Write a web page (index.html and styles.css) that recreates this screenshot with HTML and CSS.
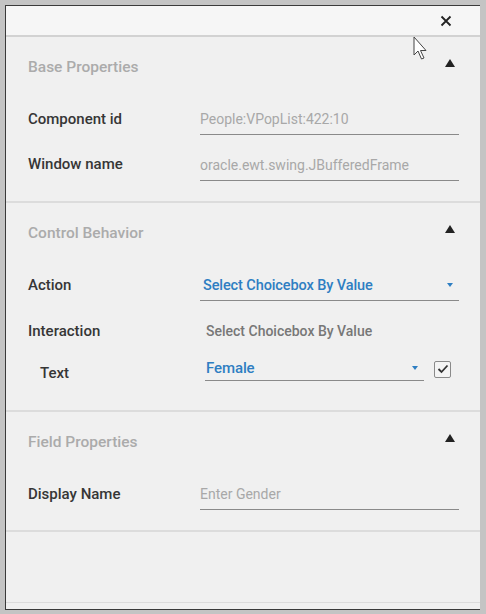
FILE: index.html
```html
<!DOCTYPE html>
<html lang="en">
<head>
<meta charset="utf-8"/>
<meta content="width=device-width, initial-scale=1.0" name="viewport"/>
<title>Properties</title>
<link rel="stylesheet" href="styles.css">
</head>
<body>
<div class="window">
  <div class="titlebar">
    <button class="close" title="Close">
      <svg width="12" height="12" viewBox="0 0 12 12"><path d="M1.5 1.5 L10.5 10.5 M10.5 1.5 L1.5 10.5" stroke="#222" stroke-width="1.8" fill="none"/></svg>
    </button>
  </div>

  <section class="group">
    <div class="group-head">
      <h2>Base Properties</h2>
      <span class="toggle"></span>
    </div>
    <div class="row">
      <label>Component id</label>
      <div class="field"><span class="value muted">People:VPopList:422:10</span></div>
    </div>
    <div class="row">
      <label>Window name</label>
      <div class="field"><span class="value muted">oracle.ewt.swing.JBufferedFrame</span></div>
    </div>
  </section>

  <section class="group behavior">
    <div class="group-head">
      <h2>Control Behavior</h2>
      <span class="toggle"></span>
    </div>
    <div class="row">
      <label>Action</label>
      <div class="field select"><span class="value blue">Select Choicebox By Value</span><span class="caret"></span></div>
    </div>
    <div class="row short">
      <label>Interaction</label>
      <div class="plain">Select Choicebox By Value</div>
    </div>
    <div class="row sub">
      <label>Text</label>
      <div class="field select narrow"><span class="value blue big">Female</span><span class="caret"></span></div>
      <span class="check">
        <svg width="12" height="10" viewBox="0 0 12 10"><path d="M1.5 5 L4.5 8 L10.5 1.5" stroke="#333" stroke-width="1.8" fill="none"/></svg>
      </span>
    </div>
  </section>

  <section class="group">
    <div class="group-head">
      <h2>Field Properties</h2>
      <span class="toggle"></span>
    </div>
    <div class="row">
      <label>Display Name</label>
      <div class="field"><span class="value muted">Enter Gender</span></div>
    </div>
  </section>

  <div class="filler"></div>

  <svg class="cursor" width="16" height="26" viewBox="0 0 16 26"><path d="M1 1 L1 19 L5 15 L8.5 23 L11 22 L7.5 14.5 L13 14.5 Z" fill="#fff" stroke="#444" stroke-width="1"/></svg>
</div>
</body>
</html>
```

FILE: styles.css
```css
html, body { margin: 0; padding: 0; height: 100%; }
body { background: #c4c4c4; font-family: Roboto, "Noto Sans", Arial, sans-serif; color: #333; }

.window {
  position: relative;
  margin: 5px 6px 0 5px;
  height: 603px;
  background: #f0f0f0;
  border-top: 1px solid #3a3a3a;
  border-left: 1px solid #3a3a3a;
  border-bottom: 1px solid #3a3a3a;
  display: flex;
  flex-direction: column;
}

.titlebar {
  height: 29px;
  flex: none;
  background: #f6f6f6;
  border-bottom: 2px solid #d2d2d2;
  display: flex;
  justify-content: flex-end;
  align-items: center;
  padding-right: 28px;
}
.close { border: none; background: none; padding: 0; width: 12px; height: 12px; display: block; }
.close svg { display: block; }

.group { border-bottom: 2px solid #dcdcdc; padding: 18px 0 14px; flex: none; }
.group.behavior { padding-bottom: 18px; }
.group-head {
  display: flex;
  align-items: center;
  justify-content: space-between;
  height: 24px;
  padding: 0 25px 0 22px;
  margin-bottom: 17px;
}
.group-head h2 { margin: 0; font-size: 15.5px; font-weight: 500; color: #ababab; }
.toggle {
  width: 0; height: 0;
  border-left: 5.5px solid transparent;
  border-right: 5.5px solid transparent;
  border-bottom: 8px solid #222;
  margin-top: -8px;
}

.row { display: flex; align-items: center; height: 45px; padding: 0 21px 0 22px; }
.row + .row { height: 46px; }
.row.short { height: 47px; }
.row.sub { height: 38px; }
.row label { width: 172px; font-size: 15px; font-weight: 500; color: #363636; }
.row.sub label { padding-left: 12px; width: 165px; }

.field {
  flex: 1;
  height: 30px;
  border-bottom: 1.5px solid #8a8a8a;
  display: flex;
  align-items: center;
  margin-top: 2px;
}
.value { font-size: 14px; }
.muted { color: #a8a8a8; }
.blue { color: #2e7ec2; font-weight: 500; font-size: 14.5px; letter-spacing: -0.1px; }
.blue.big { font-size: 15px; }
.select { padding-left: 3px; justify-content: space-between; padding-right: 6px; }
.select.narrow { flex: 0 0 219px; height: 26px; padding-left: 1px; margin-top: -10px; box-sizing: border-box; }
.caret {
  width: 0; height: 0;
  border-left: 3.5px solid transparent;
  border-right: 3.5px solid transparent;
  border-top: 4px solid #2e7ec2;
}
.plain { font-size: 14px; color: #777; font-weight: 500; padding-left: 6px; }

.check {
  width: 15px; height: 15px;
  border: 1px solid #8a8a8a;
  border-radius: 2px;
  background: #f4f4f4;
  margin-left: 10px;
  margin-top: -8px;
  display: flex; align-items: center; justify-content: center;
}

.filler { flex: 1; border-bottom: 1px solid #dcdcdc; margin-bottom: 6px; }

.cursor { position: absolute; left: 407px; top: 30px; }
```
